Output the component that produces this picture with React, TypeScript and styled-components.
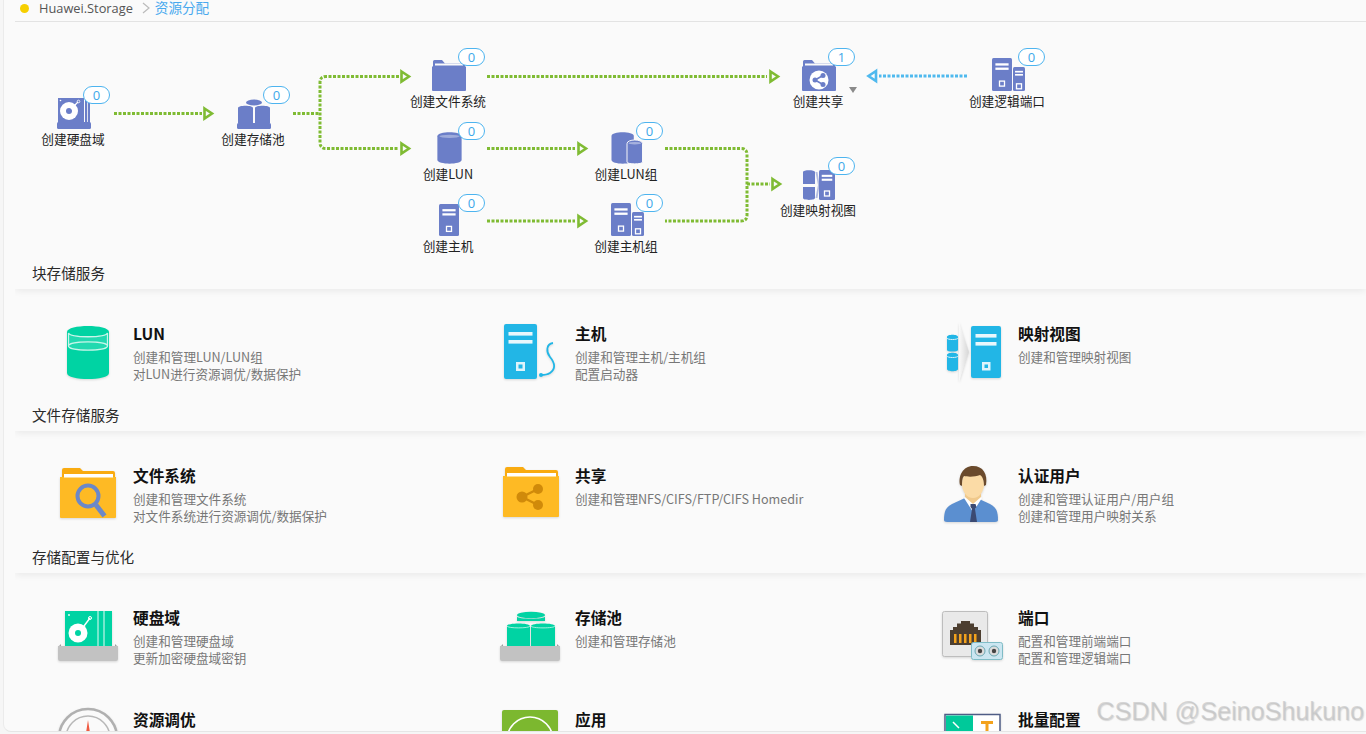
import React from "react";
import styled, { createGlobalStyle } from "styled-components";

const Global = createGlobalStyle`
  html, body { margin: 0; padding: 0; height: 100%; overflow: hidden; background: #f6f6f6; }
  body { font-family: "Noto Sans CJK SC", "Noto Sans", sans-serif; color: #222; }
`;

const Shell = styled.div`
  width: 1366px; height: 734px; display: flex; flex-direction: column; overflow: hidden;
  background: #f6f6f6; position: relative;
`;
const Frame = styled.div`
  flex: 1; min-height: 0; display: flex; overflow: hidden; margin: 0 0 2px 3px;
  background: #fafafa; border-left: 1px solid #ebebeb; border-bottom: 1px solid #e6e6e6;
  border-bottom-left-radius: 8px;
`;
const Main = styled.main`
  flex: 1; min-width: 0; overflow: hidden; display: flex; flex-direction: column;
`;
const Crumbs = styled.header`
  flex: none; margin-left: 11px; border-bottom: 1px solid #e3e3e3;
  display: flex; align-items: center; padding: 0 0 5px 5px; box-sizing: border-box; height: 22px;
  font-size: 13.4px; line-height: 16px; color: #555;
`;
const Dot = styled.span`
  width: 9px; height: 9px; border-radius: 50%; background: #f6cf00; margin-right: 10px;
`;
const CrumbRoot = styled.span`
  font-family: "Open Sans", sans-serif; font-size: 12.8px; color: #555;
`;
const CrumbSep = styled.svg`
  width: 8px; height: 12px; margin: 0 5px 0 9px;
`;
const CrumbLeaf = styled.span`
  color: #48a9ee; font-size: 13.6px; margin-top: 2px;
  font-family: "Liberation Sans", "Noto Sans CJK SC", sans-serif;
`;

const Canvas = styled.section`
  position: relative; height: 240px; flex: none;
`;
const Wires = styled.svg`
  position: absolute; left: -4px; top: 0; width: 1366px; height: 240px;
`;
const Node = styled.div<{ $x: number; $y: number }>`
  position: absolute; left: ${(p) => p.$x - 54}px; top: ${(p) => p.$y - 22}px; width: 100px;
  display: flex; flex-direction: column; align-items: center;
`;
const NodeIcon = styled.svg`
  display: block; fill: #6b7ec8;
`;
const NodeLabel = styled.div`
  margin: 1px 2px 0 0; font-size: 12.7px; line-height: 18px; color: #222; white-space: nowrap;
`;
const Badge = styled.span<{ $dx: number; $dy: number }>`
  position: absolute; left: ${(p) => p.$dx}px; top: ${(p) => p.$dy}px;
  width: 27px; height: 18px; box-sizing: border-box; border: 1px solid #4db4ef; border-radius: 9px;
  background: #fff; color: #3ea8ea; font: 13px/16px "Open Sans", sans-serif; text-align: center;
`;
const Caret = styled.span`
  position: absolute; left: 845px; top: 65px; width: 0; height: 0;
  border-left: 4.5px solid transparent; border-right: 4.5px solid transparent; border-top: 6px solid #8a8a8a;
`;

const SectionHead = styled.h2`
  margin: 0 0 0 11px; height: 27px; box-sizing: border-box; padding-left: 17px; flex: none;
  font-size: 14.6px; font-weight: 400; line-height: 21px; color: #2a2a2a; background: #fafafa;
  box-shadow: 0 2px 7px rgba(0, 0, 0, 0.07); position: relative; clip-path: inset(0 0 -14px 0);
`;
const Grid = styled.div`
  display: grid; grid-template-columns: 442px 443px 1fr; grid-auto-rows: 102px;
  padding: 13px 0 0 39px; flex: none;
`;
const Card = styled.article`
  display: flex; min-width: 0;
`;
const CardIcon = styled.svg`
  width: 90px; height: 90px; flex: none; display: block; overflow: visible;
  filter: drop-shadow(0 1px 1px rgba(0, 0, 0, 0.14));
`;
const CardBody = styled.div`
  padding-top: 20px; min-width: 0;
`;
const CardTitle = styled.h3`
  margin: 0 0 2px; font-size: 15.7px; line-height: 24px; font-weight: 700; color: #111;
`;
const CardDesc = styled.p`
  margin: 0; font-size: 12.6px; line-height: 17px; color: #777; white-space: nowrap;
`;
const Watermark = styled.div`
  position: absolute; right: 2px; top: 695px; font: 25.2px/32px "Liberation Sans", sans-serif;
  color: rgba(190, 190, 190, 0.6); text-shadow: 1px 1px 1px rgba(150, 150, 150, 0.35); white-space: nowrap;
`;

const GREEN = "#7fbb33";
const BLUE = "#4fb9ee";

const Arrow = ({ x, y, left, color = GREEN }: { x: number; y: number; left?: boolean; color?: string }) => (
  <polygon
    points={left
      ? `${x + 9},${y - 5} ${x + 1.5},${y} ${x + 9},${y + 5}`
      : `${x + 1.5},${y - 5} ${x + 9},${y} ${x + 1.5},${y + 5}`}
    fill="none" stroke={color} strokeWidth="2.6"
  />
);
const Wire = ({ d, color = GREEN }: { d: string; color?: string }) => (
  <path d={d} fill="none" stroke={color} strokeWidth="3" strokeDasharray="3 1.5" />
);

const Flow = () => (
  <Wires viewBox="0 22 1366 240">
    <Wire d="M114 113.5H202" /><Arrow x={203} y={113.5} />
    <Wire d="M293 113.5H320" />
    <Wire d="M399 76.5H326Q320 76.5 320 82.5V142.5Q320 148.5 326 148.5H399" />
    <Arrow x={400} y={76.5} /><Arrow x={400} y={148.5} />
    <Wire d="M487 76.5H767" /><Arrow x={769} y={76.5} />
    <Wire d="M487 148.5H575" /><Arrow x={577} y={148.5} />
    <Wire d="M487 221H575" /><Arrow x={577} y={221} />
    <Wire d="M665 148.5H741Q747 148.5 747 154.5V215Q747 221 741 221H665" />
    <Wire d="M747 184H770" /><Arrow x={771} y={184} />
    <Wire d="M967 76H879" color={BLUE} /><Arrow x={867} y={76} left color={BLUE} />
  </Wires>
);

const Disk = () => (
  <NodeIcon width="34" height="31" viewBox="0 0 34 31">
    <rect x="1" y="0" width="26" height="25" />
    <rect x="28" y="0" width="2.200" height="25" /><rect x="31" y="0" width="2" height="25" />
    <rect x="0" y="24" width="34" height="7" rx="1.500" />
    <circle cx="12" cy="13" r="9" fill="#fff" /><circle cx="12" cy="13" r="3" />
    <path d="M14 11l7-7" stroke="#fff" strokeWidth="1.300" />
    <circle cx="21.500" cy="3.500" r="1.300" fill="none" stroke="#fff" strokeWidth=".8" />
    <circle cx="3.500" cy="2.500" r=".8" fill="#fff" />
  </NodeIcon>
);
const Pool = () => (
  <NodeIcon width="34" height="30" viewBox="0 0 34 30">
    <ellipse cx="17" cy="3.500" rx="8" ry="3" />
    <path d="M1 9c0-3 15-3 15 0v15H1zM18 9c0-3 15-3 15 0v15H18z" />
    <rect x="0" y="24" width="34" height="6" rx="1.500" />
  </NodeIcon>
);
const Folder = ({ share }: { share?: boolean }) => (
  <NodeIcon width="34" height="31" viewBox="0 0 34 31">
    <path d="M1 1.500Q1 0 2.500 0H10l3 3.500h18Q33 3.500 33 5V8H1z" />
    <rect x="3" y="3.500" width="28" height="2" fill="#fafafa" />
    <path d="M0 6.500h34V30q0 1-1 1H1q-1 0-1-1z" />
    {share && (
      <g>
        <circle cx="17" cy="20" r="9.500" fill="#fff" />
        <path d="M21 15.500L13 20l8 4.500" fill="none" stroke="#6b7ec8" strokeWidth="1.600" />
        <circle cx="21" cy="15.500" r="2.500" /><circle cx="13" cy="20" r="2.500" /><circle cx="21" cy="24.500" r="2.500" />
      </g>
    )}
  </NodeIcon>
);
const Cyl = () => (
  <NodeIcon width="25" height="32" viewBox="0 0 25 33">
    <path d="M0 4.500C0-1 25-1 25 4.500V29C25 34 0 34 0 29z" />
    <ellipse cx="12.500" cy="4.500" rx="10.500" ry="1.600" fill="#fff" opacity=".35" />
  </NodeIcon>
);
const CylGroup = () => (
  <NodeIcon width="32" height="32" viewBox="0 0 32 33">
    <path d="M0 4C0-1 23-1 23 4V29C23 34 0 34 0 29z" />
    <path d="M16 12C16 7 32 7 32 12V31C32 33.500 16 33.500 16 31z" stroke="#fafafa" strokeWidth="1" />
    <ellipse cx="24" cy="11.500" rx="6.500" ry="1.300" fill="#fff" opacity=".4" />
  </NodeIcon>
);
const HostShape = ({ x = 0, y = 0, w = 20, h = 32 }: { x?: number; y?: number; w?: number; h?: number }) => (
  <g>
    <rect x={x} y={y} width={w} height={h} rx="1.500" />
    <rect x={x + w * 0.17} y={y + h * 0.16} width={w * 0.66} height={h * 0.07} fill="#fff" />
    <rect x={x + w * 0.17} y={y + h * 0.29} width={w * 0.66} height={h * 0.07} fill="#fff" />
    <rect x={x + w / 2 - 2.500} y={y + h * 0.7} width="5" height="5" fill="none" stroke="#fff" strokeWidth="1.300" />
  </g>
);
const Host = () => (
  <NodeIcon width="20" height="32" viewBox="0 0 20 32"><HostShape /></NodeIcon>
);
const HostGroup = () => (
  <NodeIcon width="33" height="33" viewBox="0 0 33 33">
    <HostShape w={20} h={33} /><HostShape x={21} y={9} w={12} h={24} />
  </NodeIcon>
);
const MapIcon = () => (
  <NodeIcon width="32" height="30" viewBox="0 0 32 30">
    <path d="M0 2c0-2.500 12-2.500 12 0v12H0zM0 17h12v11c0 2.500-12 2.500-12 0z" />
    <path d="M12.500 2l2.500 13-2.500 13 2 0 2-13-2-13z" opacity=".5" />
    <HostShape x={16} y={0} w={16} h={30} />
  </NodeIcon>
);

const Node2 = ({ x, y, label, bx, by, n = 0, children }: { x: number; y: number; label: string; bx: number; by: number; n?: number; children: React.ReactNode }) => (
  <Node $x={x} $y={y}>
    {children}
    <NodeLabel>{label}</NodeLabel>
    <Badge $dx={bx - (x - 50)} $dy={by - y}>{n}</Badge>
  </Node>
);

const TEAL = "#00d3a3";
const CY = "#22b6e6";
const YEL = "#feba24";

const LunArt = () => (
  <CardIcon viewBox="0 0 90 90">
    <path d="M24 30C24 22 66 22 66 30V71C66 79 24 79 24 71z" fill={TEAL} />
    <path d="M25.500 31c2 5 37 5 39 0V44c0 5.500-39 5.500-39 0z" fill="#22d9b0" />
    <path d="M25.500 31c2 5 37 5 39 0V44c0 5.500-39 5.500-39 0zM25.500 44c0-5.500 39-5.500 39 0" fill="none" stroke="#c9f5ea" strokeWidth="1.300" />
  </CardIcon>
);
const HostArt = () => (
  <CardIcon viewBox="0 0 90 90">
    <rect x="19" y="22" width="33" height="55" rx="2" fill={CY} />
    <rect x="23.500" y="30" width="24" height="3.600" fill="#e9f7fc" /><rect x="23.500" y="38" width="24" height="3.600" fill="#e9f7fc" />
    <rect x="31" y="60" width="9" height="9" fill="#dff4fb" /><rect x="33.500" y="62.500" width="4" height="4" fill={CY} />
    <path d="M68 41c-7 1-7 9-3 14 5 6 6 12 0 16-3 2-6 2-9 2" fill="none" stroke={CY} strokeWidth="1.800" />
    <circle cx="56" cy="73" r="2" fill={CY} />
  </CardIcon>
);
const MapArt = () => (
  <CardIcon viewBox="0 0 90 90">
    <defs>
      <linearGradient id="cv" x1="0" x2="1"><stop offset="0" stopColor="#fafafa" /><stop offset="1" stopColor="#d6d6d6" /></linearGradient>
    </defs>
    <path d="M19 35c0-3 11-3 11 0v13c0 2-11 2-11 0zM19 53c0-3 11-3 11 0v14c0 3-11 3-11 0z" fill={CY} />
    <path d="M19 36c0 2 11 2 11 0M19 54c0 2 11 2 11 0" fill="none" stroke="#d4f1fa" strokeWidth="1" />
    <path d="M31 20l10 30-10 30z" fill="url(#cv)" />
    <rect x="43" y="24" width="30" height="52" rx="2" fill={CY} />
    <rect x="47.500" y="32" width="21" height="3.600" fill="#e9f7fc" /><rect x="47.500" y="40" width="21" height="3.600" fill="#e9f7fc" />
    <rect x="54" y="60" width="8.500" height="8.500" fill="#dff4fb" /><rect x="56.500" y="62.500" width="3.500" height="3.500" fill={CY} />
  </CardIcon>
);
const YellowFolder = ({ x, y }: { x: number; y: number }) => (
  <g transform={`translate(${x} ${y})`}>
    <path d="M2 2Q2 0 4 0H20l3 3H53q2 0 2 2V14H2z" fill="#f9ab10" />
    <path d="M0 9h56V49q0 1-1 1H1q-1 0-1-1z" fill={YEL} />
    <rect x="4" y="6" width="49" height="3.500" fill="#fff" />
  </g>
);
const SearchFolderArt = () => (
  <CardIcon viewBox="0 0 90 90">
    <YellowFolder x={17} y={24} />
    <circle cx="45" cy="52" r="10.500" fill="none" stroke="#6b88c8" strokeWidth="4" />
    <path d="M53 61l8.500 11" stroke="#6b88c8" strokeWidth="5" />
  </CardIcon>
);
const ShareFolderArt = () => (
  <CardIcon viewBox="0 0 90 90">
    <YellowFolder x={18} y={23} />
    <path d="M53 45L37 53l16 8" fill="none" stroke="#d08a0a" strokeWidth="2.400" />
    <circle cx="53" cy="45" r="5" fill="#d08a0a" /><circle cx="37" cy="53" r="5.500" fill="#d08a0a" /><circle cx="53" cy="61" r="5" fill="#d08a0a" />
  </CardIcon>
);
const UserArt = () => (
  <CardIcon viewBox="0 0 90 90">
    <path d="M16 76c0-9 2-13 8-16l13-6h12l13 6c6 3 8 7 8 16 0 1-1 2-3 2H19c-2 0-3-1-3-2z" fill="#5b8fd0" />
    <path d="M36 54l9 14 9-14-3-3H39z" fill="#fff" />
    <path d="M42.500 60h5l1 3-1.500 2 2 13h-7l2-13-1.500-2z" fill="#3b4a72" />
    <path d="M37 46h16v7l-8 7-8-7z" fill="#f0c98c" />
    <ellipse cx="45" cy="40" rx="11" ry="14" fill="#fbdba6" />
    <path d="M32 41c-2-9 3-19 13-19s15 8 13 19l-2 1c0-5-1-9-4-11-5 2-12 2-16 1-2 2-2 6-2 10z" fill="#6a4a2c" />
  </CardIcon>
);
const Tray = () => (
  <g>
    <path d="M15 61l3-3v3h54v-3l3 3z" fill="#9d9d9d" />
    <path d="M15 60h60v13q0 2-2 2H17q-2 0-2-2z" fill="#c2c2c2" />
  </g>
);
const DiskArt = () => (
  <CardIcon viewBox="0 0 90 90">
    <rect x="22" y="25" width="47" height="35" fill={TEAL} />
    <path d="M55 25v35M61 25v35" stroke="#e9fbf6" strokeWidth="1" />
    <circle cx="26" cy="29" r=".9" fill="#fff" />
    <circle cx="35" cy="47" r="9.500" fill="#fff" /><circle cx="35" cy="47" r="3" fill={TEAL} />
    <path d="M38 44l9-12" stroke="#fff" strokeWidth="1.400" /><circle cx="47" cy="32" r="1.500" fill="none" stroke="#fff" />
    <Tray />
  </CardIcon>
);
const PoolArt = () => (
  <CardIcon viewBox="0 0 90 90">
    <ellipse cx="46" cy="29" rx="14" ry="3.200" fill={TEAL} />
    <path d="M32 30.500c0 3 28 3 28 0V35H32z" fill={TEAL} />
    <path d="M22 40c0-3.500 23-3.500 23 0v20H22zM46 40c0-3.500 24-3.500 24 0v20H46z" fill={TEAL} />
    <path d="M22 40c0 2.500 23 2.500 23 0M46 40c0 2.500 24 2.500 24 0" fill="none" stroke="#c9f5ea" strokeWidth=".8" />
    <Tray />
  </CardIcon>
);
const PortArt = () => (
  <CardIcon viewBox="0 0 90 90">
    <rect x="14.500" y="25.500" width="45" height="45" rx="2" fill="#e9e9e9" stroke="#bdbdbd" />
    <path d="M33 35h9v2.500h4V41h4v3h3v15H22V44h3v-3h4v-3.500h4z" fill="#4c3e30" />
    <path d="M26 48h2.500v9H26zM31 48h2.500v9H31zM36 48h2.500v9H36zM41 48h2.500v9H41zM46 48h2.500v9H46z" fill="#f3a21c" />
    <rect x="43.500" y="56.500" width="31" height="17" rx="2" fill="#cbe6f1" stroke="#7fbcc6" />
    <circle cx="52" cy="65" r="5" fill="#dcdcdc" stroke="#6aa9b4" /><circle cx="52" cy="65" r="2.200" fill="#444" />
    <circle cx="66" cy="65" r="5" fill="#dcdcdc" stroke="#6aa9b4" /><circle cx="66" cy="65" r="2.200" fill="#444" />
  </CardIcon>
);
const GaugeArt = () => (
  <CardIcon viewBox="0 0 90 90">
    <circle cx="45" cy="50" r="29" fill="#fafafa" stroke="#b0b0b0" strokeWidth="2.500" />
    <circle cx="45" cy="50" r="22" fill="none" stroke="#b8b8b8" strokeWidth="1.500" />
    <path d="M45 32l2.500 16h-5z" fill="#ef5a41" />
  </CardIcon>
);
const AppArt = () => (
  <CardIcon viewBox="0 0 90 90">
    <rect x="17" y="22" width="56" height="60" rx="2" fill="#7cb82f" />
    <circle cx="45" cy="52" r="23" fill="none" stroke="#fff" strokeWidth="1.600" />
  </CardIcon>
);
const BatchArt = () => (
  <CardIcon viewBox="0 0 90 90">
    <rect x="17" y="26.500" width="55" height="50" fill="#fff" stroke="#4f5d86" strokeWidth="1.500" />
    <rect x="18" y="27.500" width="27" height="48" fill="#00c99a" />
    <path d="M25 34l6 6" stroke="#fff" strokeWidth="1.500" />
    <path d="M53 33h12v3h-4.500v8h-3v-8H53z" fill="#f3a21c" />
  </CardIcon>
);

type Item = { art: React.ReactNode; title: string; lines: string[] };

const Section = ({ title, items }: { title: string; items: Item[] }) => (
  <>
    <SectionHead>{title}</SectionHead>
    <Grid>
      {items.map((it) => (
        <Card key={it.title}>
          {it.art}
          <CardBody>
            <CardTitle>{it.title}</CardTitle>
            {it.lines.map((l) => <CardDesc key={l}>{l}</CardDesc>)}
          </CardBody>
        </Card>
      ))}
    </Grid>
  </>
);

const block: Item[] = [
  { art: <LunArt />, title: "LUN", lines: ["创建和管理LUN/LUN组", "对LUN进行资源调优/数据保护"] },
  { art: <HostArt />, title: "主机", lines: ["创建和管理主机/主机组", "配置启动器"] },
  { art: <MapArt />, title: "映射视图", lines: ["创建和管理映射视图"] },
];
const file: Item[] = [
  { art: <SearchFolderArt />, title: "文件系统", lines: ["创建和管理文件系统", "对文件系统进行资源调优/数据保护"] },
  { art: <ShareFolderArt />, title: "共享", lines: ["创建和管理NFS/CIFS/FTP/CIFS Homedir"] },
  { art: <UserArt />, title: "认证用户", lines: ["创建和管理认证用户/用户组", "创建和管理用户映射关系"] },
];
const config: Item[] = [
  { art: <DiskArt />, title: "硬盘域", lines: ["创建和管理硬盘域", "更新加密硬盘域密钥"] },
  { art: <PoolArt />, title: "存储池", lines: ["创建和管理存储池"] },
  { art: <PortArt />, title: "端口", lines: ["配置和管理前端端口", "配置和管理逻辑端口"] },
  { art: <GaugeArt />, title: "资源调优", lines: [] },
  { art: <AppArt />, title: "应用", lines: [] },
  { art: <BatchArt />, title: "批量配置", lines: [] },
];

export default function App() {
  return (
    <Shell>
      <Global />
      <Frame>
        <Main>
          <Crumbs>
            <Dot />
            <CrumbRoot>Huawei.Storage</CrumbRoot>
            <CrumbSep viewBox="0 0 8 12"><path d="M1 1l6 5-6 5" fill="none" stroke="#bbb" strokeWidth="1.200" /></CrumbSep>
            <CrumbLeaf>资源分配</CrumbLeaf>
          </Crumbs>
          <Canvas>
            <Flow />
            <Node2 x={74} y={98} label="创建硬盘域" bx={83} by={86}><Disk /></Node2>
            <Node2 x={254} y={99} label="创建存储池" bx={263} by={86}><Pool /></Node2>
            <Node2 x={449} y={60} label="创建文件系统" bx={458} by={48}><Folder /></Node2>
            <Node2 x={449} y={132} label="创建LUN" bx={458} by={122}><Cyl /></Node2>
            <Node2 x={449} y={204} label="创建主机" bx={458} by={194}><Host /></Node2>
            <Node2 x={627} y={132} label="创建LUN组" bx={636} by={122}><CylGroup /></Node2>
            <Node2 x={627} y={203} label="创建主机组" bx={636} by={194}><HostGroup /></Node2>
            <Node2 x={819} y={60} label="创建共享" bx={828} by={48} n={1}><Folder share /></Node2>
            <Node2 x={1008} y={58} label="创建逻辑端口" bx={1018} by={48}><HostGroup /></Node2>
            <Node2 x={819} y={170} label="创建映射视图" bx={828} by={157}><MapIcon /></Node2>
            <Caret />
          </Canvas>
          <Section title="块存储服务" items={block} />
          <Section title="文件存储服务" items={file} />
          <Section title="存储配置与优化" items={config} />
        </Main>
      </Frame>
      <Watermark>CSDN @SeinoShukuno</Watermark>
    </Shell>
  );
}
